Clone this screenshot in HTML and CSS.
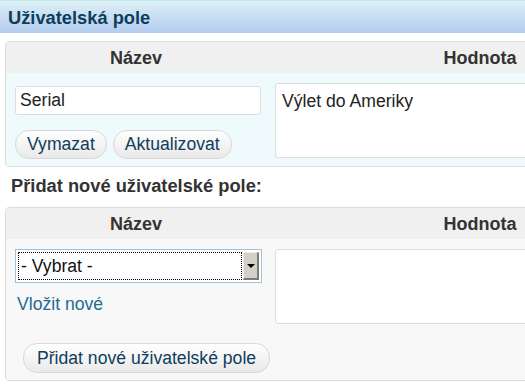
FILE: index.html
```html
<html>
<head>
<title>Uživatelská pole</title>
<meta charset="utf-8">
<meta name="viewport" content="width=device-width, initial-scale=1">
<link rel="stylesheet" href="styles.css">
</head>
<body>

<div class="titulek">Uživatelská pole</div>

<div class="panel">
	<div class="hlavicka">
		<div class="sloupecNazev">Název</div>
		<div class="sloupecHodnota">Hodnota</div>
	</div>
	<div class="radek radekUpravit">
		<div class="sloupecNazev">
			<input class="pole" type="text" value="Serial">
			<div class="tlacitka">
				<button class="tlacitko">Vymazat</button>
				<button class="tlacitko">Aktualizovat</button>
			</div>
		</div>
		<div class="sloupecHodnota">
			<textarea class="hodnota">Výlet do Ameriky</textarea>
		</div>
	</div>
</div>

<h3 class="nadpis">Přidat nové uživatelské pole:</h3>

<div class="panel">
	<div class="hlavicka">
		<div class="sloupecNazev">Název</div>
		<div class="sloupecHodnota">Hodnota</div>
	</div>
	<div class="radek radekNovy">
		<div class="sloupecNazev">
			<div class="vyber">
				<select class="vyberPole">
					<option>- Vybrat -</option>
				</select>
				<span class="vyberSipka"><span class="trojuhelnik"></span></span>
			</div>
			<a class="odkaz" href="#">Vložit nové</a>
			<button class="tlacitko tlacitkoPridat">Přidat nové uživatelské pole</button>
		</div>
		<div class="sloupecHodnota">
			<textarea class="hodnota"></textarea>
		</div>
	</div>
</div>

</body>
</html>
```

FILE: styles.css
```css
    body{
        margin: 0;
        background: white;
        font-family: "Liberation Sans", Arial, sans-serif;
        font-size: 17.6px;
        color: #333;
        overflow: hidden;
    }

    .titulek{
        height: 32px;
        line-height: 33px;
        padding-left: 8px;
        border-top: 1px solid #c4e4ee;
        background: linear-gradient(#dcf1f6, #b3cbee);
        color: #0f3d5c;
        font-size: 18.3px;
        font-weight: bold;
    }

    .panel{
        width: 690px;
        margin: 8px 0 0 5px;
        border: 1px solid #dcdcdc;
        border-radius: 4px;
        overflow: hidden;
    }

    .hlavicka{
        display: flex;
        height: 31px;
        line-height: 33px;
        background: #f0f0f0;
        font-size: 18px;
        font-weight: bold;
        text-align: center;
    }

    .sloupecNazev{
        width: 260px;
        flex: none;
    }

    .sloupecHodnota{
        width: 428px;
        flex: none;
    }

	.radek{
		display: flex;
	}

	.radek .sloupecNazev{
		box-sizing: border-box;
		padding-left: 9px;
		display: flex;
		flex-direction: column;
		align-items: flex-start;
	}

	.radek .sloupecHodnota{
		box-sizing: border-box;
		padding: 10px 0 0 9px;
	}

	.radekUpravit{
		background: #eefafb;
	}

	.radekUpravit .sloupecNazev{
		padding-top: 13px;
		padding-bottom: 7px;
	}

	.radekNovy{
		background: #f8f8f8;
	}

	.radekNovy .sloupecNazev{
		padding-top: 10px;
		padding-bottom: 7px;
	}

	.pole{
		box-sizing: border-box;
		width: 246px;
		height: 29px;
		margin: 0;
		padding: 0 4px;
		border: 1px solid #dcdcdc;
		border-radius: 3px;
		background: white;
		font-family: "Liberation Sans", Arial, sans-serif;
		font-size: 17.6px;
		color: #222;
	}

	.hodnota{
		box-sizing: border-box;
		display: block;
		width: 400px;
		height: 75px;
		margin: 0;
		padding: 7px 6px;
		border: 1px solid #dcdcdc;
		border-radius: 3px;
		background: white;
		font-family: "Liberation Sans", Arial, sans-serif;
		font-size: 17.6px;
		color: #222;
		resize: none;
	}

	.tlacitka{
		display: flex;
		gap: 6px;
		margin-top: 15px;
	}

	.tlacitko{
		height: 29px;
		margin: 0;
		padding: 0 11px;
		border: 1px solid #d8d8d8;
		border-radius: 14px;
		background: linear-gradient(#ffffff, #e9e9e9);
		color: #0f3d5c;
		font-family: "Liberation Sans", Arial, sans-serif;
		font-size: 17.6px;
		white-space: nowrap;
	}

	.nadpis{
		margin: 9px 0 0 11px;
		height: 23px;
		line-height: 20px;
		font-size: 18.3px;
		font-weight: bold;
		color: #333;
	}

	.vyber{
		box-sizing: border-box;
		display: flex;
		width: 247px;
		height: 34px;
		padding: 2px;
		border: 1px solid #9fc3d8;
		background: white;
	}

	.vyberPole{
		flex: 1;
		margin: 0;
		padding: 0 2px;
		border: 1px dotted black;
		background: white;
		appearance: none;
		-webkit-appearance: none;
		font-family: "Liberation Sans", Arial, sans-serif;
		font-size: 17.6px;
		color: #111;
	}

	.vyberSipka{
		box-sizing: border-box;
		width: 16px;
		margin-left: 1px;
		border-top: 1px solid #ece9e2;
		border-left: 1px solid #ece9e2;
		border-right: 2px solid #7d7a74;
		border-bottom: 2px solid #7d7a74;
		background: #d4d0c8;
		display: flex;
		align-items: center;
		justify-content: center;
	}

	.trojuhelnik{
		width: 0;
		height: 0;
		border-left: 4px solid transparent;
		border-right: 4px solid transparent;
		border-top: 4px solid black;
	}

	.odkaz{
		margin: 11px 0 0 2px;
		color: #236c93;
		text-decoration: none;
	}

	.tlacitkoPridat{
		flex: none;
		height: 30px;
		margin: 28px 0 0 8px;
		padding: 0 13px;
	}
```
